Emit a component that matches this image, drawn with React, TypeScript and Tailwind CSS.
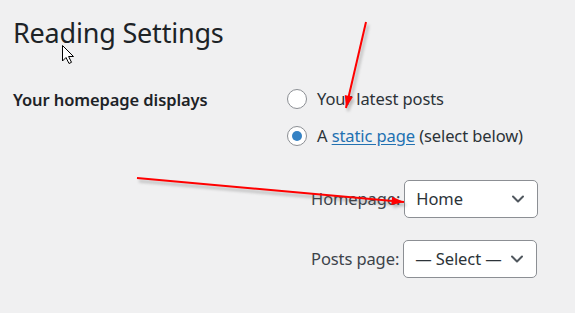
import { ChevronDown } from 'lucide-react';

const font = { fontFamily: '"Noto Sans", "Open Sans", Arial, sans-serif' };

function Radio({ checked }: { checked?: boolean }) {
  return (
    <span className="grid h-[20px] w-[20px] shrink-0 place-items-center rounded-full border border-[#8c8f94] bg-white">
      {checked && <span className="h-[10px] w-[10px] rounded-full bg-[#3582c4]" />}
    </span>
  );
}

function Select({ value }: { value: string }) {
  return (
    <div className="flex h-[38px] w-[134px] items-center justify-between whitespace-nowrap rounded-[5px] border border-[#8c8f94] bg-white pl-[11px] pr-[9px] text-[16.5px] tracking-[-0.1px] text-[#2c3338]">
      <span>{value}</span>
      <ChevronDown size={20} strokeWidth={2.4} className="shrink-0 text-[#50575e]" />
    </div>
  );
}

function Arrow({ x1, y1, x2, y2 }: { x1: number; y1: number; x2: number; y2: number }) {
  const a = Math.atan2(y2 - y1, x2 - x1);
  const len = 13;
  const w = 0.32;
  const p1 = [x2 - len * Math.cos(a - w), y2 - len * Math.sin(a - w)];
  const p2 = [x2 - len * Math.cos(a + w), y2 - len * Math.sin(a + w)];
  const head = `${x2},${y2} ${p1[0]},${p1[1]} ${p2[0]},${p2[1]}`;
  return (
    <g>
      <g transform="translate(2,3)" opacity="0.35" filter="url(#blur)">
        <line x1={x1} y1={y1} x2={x2} y2={y2} stroke="#555" strokeWidth="2.5" />
        <polygon points={head} fill="#555" />
      </g>
      <line x1={x1} y1={y1} x2={x2} y2={y2} stroke="#f00" strokeWidth="2" />
      <polygon points={head} fill="#f00" />
    </g>
  );
}

export default function App() {
  return (
    <div className="relative h-[313px] w-[575px] overflow-hidden bg-[#f0f0f1] text-[#1d2327]" style={font}>
      <div className="pl-[13px] pt-[13px]">
        <h1 className="text-[27px] leading-[40px] font-normal tracking-[-0.2px]">Reading Settings</h1>

        <div className="mt-[34px] flex">
          <div className="w-[274px] pt-[1px] text-[16.5px] leading-[24px] font-semibold tracking-[-0.1px]">
            Your homepage displays
          </div>
          <div className="flex flex-col text-[16.5px] leading-[24px] tracking-[-0.1px] text-[#2c3338]">
            <div className="flex items-center gap-[10px]">
              <Radio />
              <span>Your latest posts</span>
            </div>
            <div className="mt-[13px] flex items-center gap-[10px]">
              <Radio checked />
              <span>
                A <span className="text-[#2271b1] underline underline-offset-2">static page</span> (select below)
              </span>
            </div>

            <div className="mt-[32px] flex items-center gap-[4px] pl-[24px]">
              <span className="text-[#3c434a]">Homepage:</span>
              <Select value="Home" />
            </div>
            <div className="mt-[22px] flex items-center gap-[4px] pl-[24px]">
              <span className="text-[#3c434a]">Posts page:</span>
              <Select value="— Select —" />
            </div>
          </div>
        </div>
      </div>

      <svg className="pointer-events-none absolute inset-0" width="575" height="313">
        <defs>
          <filter id="blur" x="-20%" y="-20%" width="140%" height="140%">
            <feGaussianBlur stdDeviation="1.5" />
          </filter>
        </defs>
        <Arrow x1={366} y1={22} x2={346} y2={108} />
        <Arrow x1={137} y1={178} x2={404} y2={202} />
        <path
          d="M62.5 45.5 L62.5 61 L66 57.5 L69 63.5 L71.5 62.3 L68.6 56.5 L73.5 56.5 Z"
          fill="#fff"
          stroke="#000"
          strokeWidth="1"
          strokeLinejoin="round"
        />
      </svg>
    </div>
  );
}
